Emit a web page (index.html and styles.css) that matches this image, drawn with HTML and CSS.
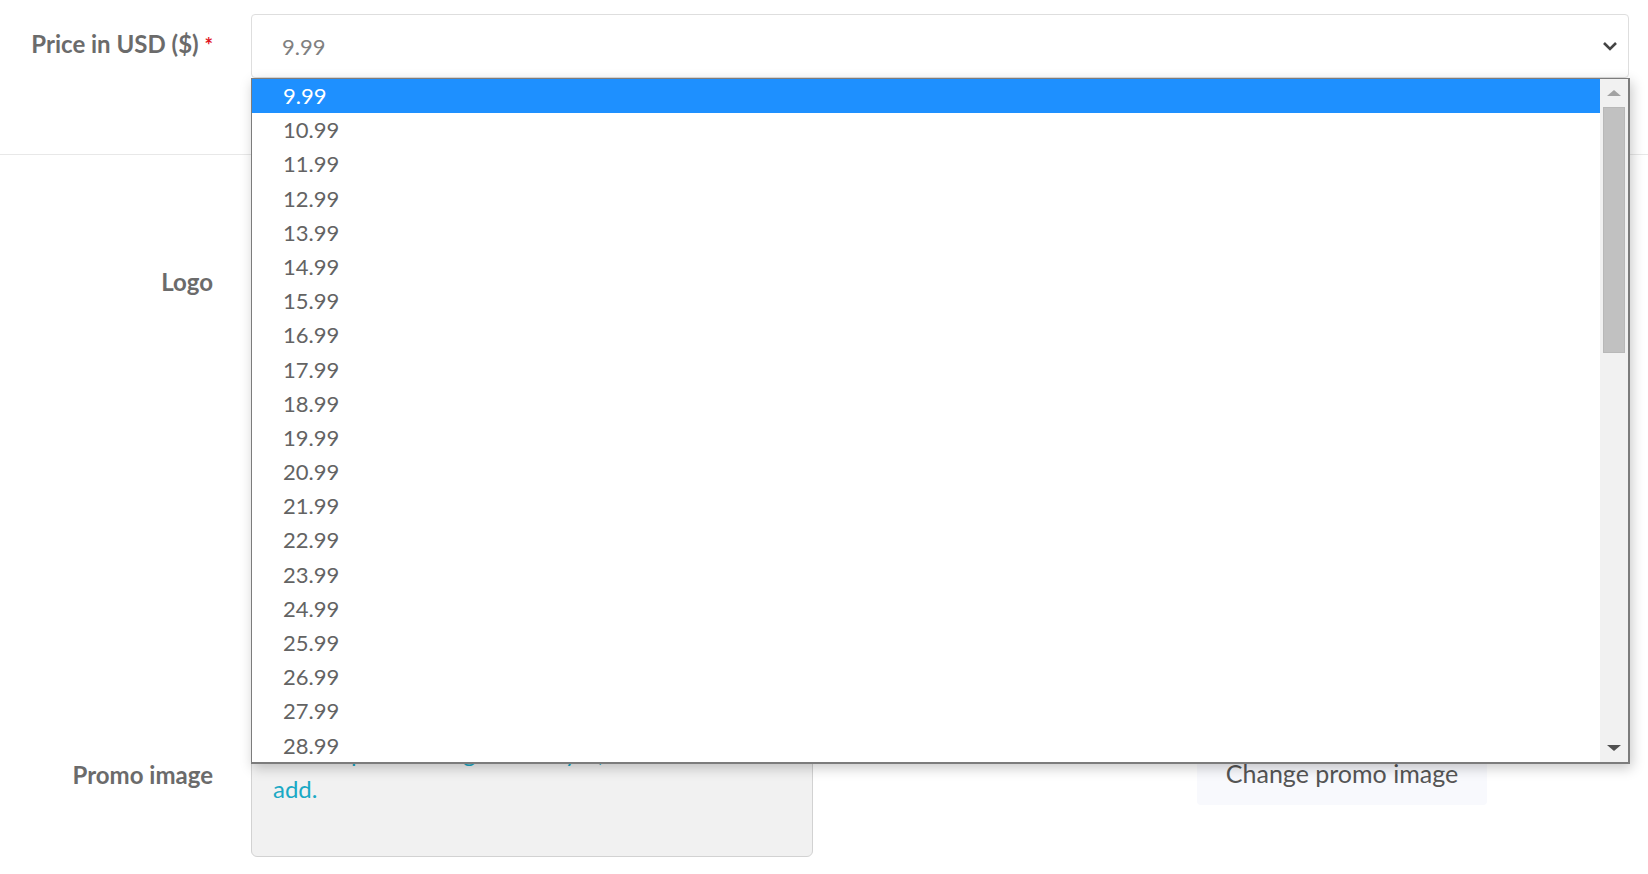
FILE: index.html
```html
<!DOCTYPE html>
<html lang="en">
<head>
    <meta charset="UTF-8">
    <meta name="viewport" content="width=device-width, initial-scale=1.0">
    <title>Edit listing</title>
    <link rel="stylesheet" href="styles.css">
</head>
<body>

    <form class="listing-form">

        <!-- Price -->
        <div class="form-row price-row">
            <label class="form-label" for="price">Price in USD ($) <span class="required">*</span></label>
            <div class="field">
                <div class="select-box" id="price">
                    <span class="select-value">9.99</span>
                    <svg class="chevron" width="16" height="10" viewBox="0 0 16 10">
                        <path d="M2 2 L8 8 L14 2" fill="none" stroke="#444" stroke-width="2.6"/>
                    </svg>
                </div>

                <!-- Open dropdown list -->
                <div class="dropdown">
                    <ul class="options">
                        <li class="selected">9.99</li>
                        <li>10.99</li>
                        <li>11.99</li>
                        <li>12.99</li>
                        <li>13.99</li>
                        <li>14.99</li>
                        <li>15.99</li>
                        <li>16.99</li>
                        <li>17.99</li>
                        <li>18.99</li>
                        <li>19.99</li>
                        <li>20.99</li>
                        <li>21.99</li>
                        <li>22.99</li>
                        <li>23.99</li>
                        <li>24.99</li>
                        <li>25.99</li>
                        <li>26.99</li>
                        <li>27.99</li>
                        <li>28.99</li>
                        <li>29.99</li>
                        <li>30.99</li>
                    </ul>
                    <div class="scrollbar">
                        <div class="sb-btn"><span class="arrow-up"></span></div>
                        <div class="sb-thumb"></div>
                        <div class="sb-track"></div>
                        <div class="sb-btn"><span class="arrow-down"></span></div>
                    </div>
                </div>
            </div>
        </div>

        <!-- Logo -->
        <div class="form-row logo-row">
            <label class="form-label">Logo</label>
            <div class="field">
                <div class="image-box logo-box"></div>
            </div>
        </div>

        <!-- Promo image -->
        <div class="form-row promo-row">
            <label class="form-label">Promo image</label>
            <div class="field promo-field">
                <div class="image-box promo-box">
                    <p class="empty-note">Still no promo image added yet, click the button to add.</p>
                </div>
                <button type="button" class="change-btn">Change promo image</button>
            </div>
        </div>

    </form>

</body>
</html>
```

FILE: styles.css
```css
body {
    margin: 0;
    background-color: #ffffff;
    font-family: Lato, "Open Sans", sans-serif;
    color: #5a5a5a;
}
.form-row {
    display: flex;
    align-items: flex-start;
    padding-right: 19px;
}
.form-label {
    width: 213px;
    flex-shrink: 0;
    margin-right: 38px;
    text-align: right;
    font-size: 24px;
    font-weight: 700;
    line-height: 34px;
    color: #6b6b6b;
}
.required {
    color: #e0141e;
    font-size: 20px;
    font-weight: 700;
}
.field {
    flex: 1;
    position: relative;
}

/* price row */
.price-row {
    height: 155px;
    box-sizing: border-box;
    padding-top: 14px;
    border-bottom: 1px solid #e8e8e8;
}
.price-row .form-label {
    padding-top: 13px;
}
.select-box {
    height: 64px;
    box-sizing: border-box;
    border: 1px solid #dedede;
    border-radius: 4px;
    display: flex;
    align-items: center;
    justify-content: space-between;
    padding: 0 10px 0 30px;
    background: #fff;
}
.select-value {
    font-size: 22px;
    color: #808080;
}

/* the open list sits over the rows below */
.dropdown {
    position: absolute;
    top: 64px;
    left: 0;
    right: -1px;
    height: 686px;
    box-sizing: border-box;
    border: 1px solid #7c7c7c;
    border-right-width: 2px;
    border-bottom-width: 2px;
    background: #fff;
    display: flex;
    box-shadow: 2px 4px 12px rgba(0, 0, 0, 0.22);
    z-index: 10;
}
.options {
    flex: 1;
    list-style: none;
    margin: 0;
    padding: 0;
    overflow: hidden;
}
.options li {
    height: 34.2px;
    line-height: 34px;
    padding-left: 31px;
    font-size: 22px;
    color: #636363;
}
.options li.selected {
    background-color: #1e90ff;
    color: #ffffff;
}
.scrollbar {
    width: 28px;
    display: flex;
    flex-direction: column;
    align-items: center;
    background: #f1f1f1;
}
.sb-btn {
    height: 28px;
    width: 100%;
    display: flex;
    align-items: center;
    justify-content: center;
}
.arrow-up {
    border-left: 7px solid transparent;
    border-right: 7px solid transparent;
    border-bottom: 6px solid #a3a3a3;
}
.arrow-down {
    border-left: 7px solid transparent;
    border-right: 7px solid transparent;
    border-top: 6px solid #505050;
}
.sb-thumb {
    width: 22px;
    height: 246px;
    background: #c1c1c1;
    border: 1px solid #b8b8b8;
    box-sizing: border-box;
}
.sb-track {
    flex: 1;
}

/* logo row */
.logo-row {
    padding-top: 40px;
}
.logo-row .form-label {
    padding-top: 70px;
}
.image-box {
    width: 562px;
    box-sizing: border-box;
    background: #f1f1f1;
    border: 1px solid #d2d2d2;
    border-radius: 6px;
}
.logo-box {
    height: 480px;
}

/* promo row */
.promo-row {
    padding-top: 37px;
}
.promo-row .form-label {
    padding-top: 46px;
}
.promo-field {
    display: flex;
    align-items: flex-start;
}
.promo-box {
    height: 145px;
    padding: 22px 4px 0 21px;
}
.empty-note {
    margin: 0;
    font-size: 24px;
    line-height: 36px;
    color: #1aa9c5;
}
.change-btn {
    margin-left: 384px;
    margin-top: 29px;
    width: 290px;
    height: 64px;
    border: none;
    border-radius: 4px;
    background-color: #f8f9fd;
    font-family: Lato, "Open Sans", sans-serif;
    font-size: 25px;
    color: #555555;
    cursor: pointer;
}
```
